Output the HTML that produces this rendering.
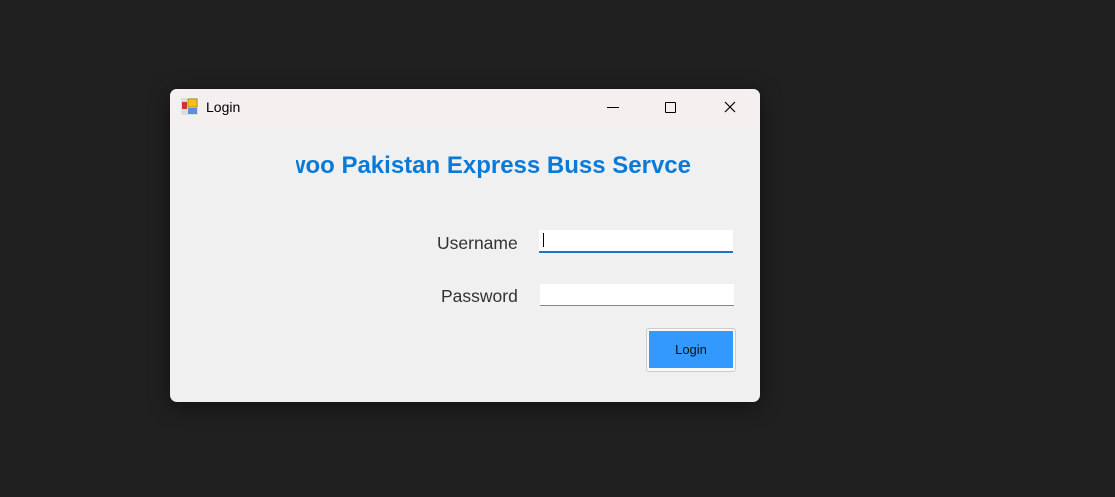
<!DOCTYPE html>
<html><head><style>
body{margin:0;width:1115px;height:497px;background:#202020;position:relative;overflow:hidden;font-family:"Liberation Sans",sans-serif}
.win{position:absolute;left:170px;top:89px;width:590px;height:313px;background:#f0f0f0;border-radius:7px;overflow:hidden;box-shadow:0 4px 20px rgba(0,0,0,.5)}
.tb{height:38px;background:#f5f0f0;position:relative}
.t{position:absolute;left:36px;top:10px;font-size:14px;color:#000}
.abs{position:absolute}
.lbl{position:absolute;font-size:17.5px;color:#333}
.in{position:absolute;background:#fff;height:21px;width:194px}
</style></head><body>
<div class="win">
<div class="tb">
<svg class="abs" style="left:11px;top:9px" width="17" height="17"><rect x="0" y="0" width="17" height="17" fill="#ddd"/><rect x="1" y="4" width="5" height="7" fill="#c33"/><rect x="7" y="1" width="9" height="8" fill="#f4c020" stroke="#a80" stroke-width=".8"/><rect x="7" y="10" width="9" height="6" fill="#5a8fe0"/></svg>
<div class="t">Login</div>
<div class="abs" style="left:437px;top:18px;width:12px;height:1px;background:#000"></div>
<div class="abs" style="left:495px;top:13px;width:9px;height:9px;border:1.3px solid #000;border-radius:1px"></div>
<svg class="abs" style="left:554px;top:12px" width="12" height="12"><path d="M1 1L11 11M11 1L1 11" stroke="#000" stroke-width="1.2"/></svg>
</div>
<div class="abs" style="left:126px;top:63px;width:395px;height:34px;overflow:hidden"><span style="position:absolute;right:0;top:0;font-size:24px;font-weight:bold;color:#0a7ad8;white-space:nowrap">Daewoo Pakistan Express Buss Servce</span></div>
<div class="lbl" style="left:267px;top:144px">Username</div>
<div class="lbl" style="left:271px;top:197px">Password</div>
<div class="in" style="left:369px;top:141px;border-bottom:2px solid #1a73c8"></div>
<div class="abs" style="left:373px;top:144px;width:1px;height:14px;background:#000"></div>
<div class="in" style="left:370px;top:195px;border-bottom:1px solid #888"></div>
<div class="abs" style="left:476px;top:239px;width:88px;height:42px;border:1px solid #ccc;border-radius:3px;background:#f8f8f8"></div>
<div class="abs" style="left:479px;top:242px;width:84px;height:37px;background:#3399ff;font-size:13px;color:#111;text-align:center;line-height:37px">Login</div>
</div>
</body></html>
